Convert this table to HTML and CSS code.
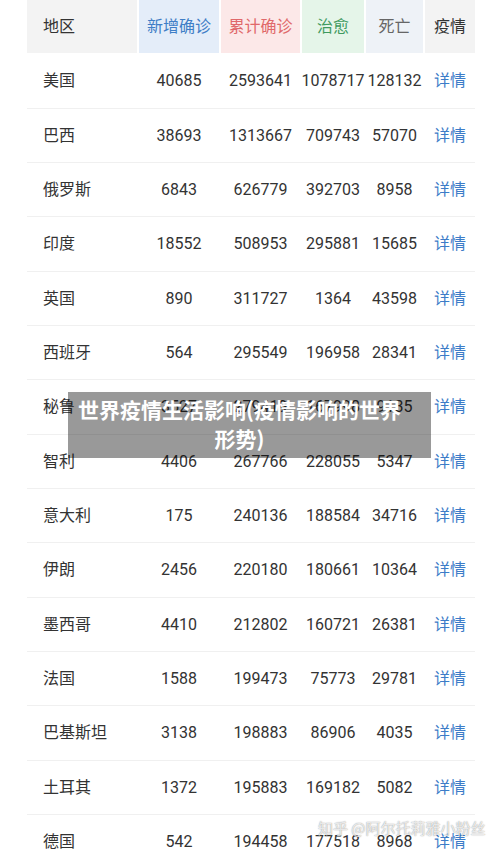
FILE: index.html
```html
<!DOCTYPE html>
<html lang="zh-CN">
<head>
  <meta charset="UTF-8" />
  <meta name="viewport" content="width=device-width, initial-scale=1.0"/>
  <title>世界疫情</title>
  <link rel="stylesheet" href="styles.css">
</head>
<body>
  <div class="table">
    <div class="row head">
      <div class="cell area">地区</div>
      <div class="cell h-new">新增确诊</div>
      <div class="cell h-total">累计确诊</div>
      <div class="cell h-cure">治愈</div>
      <div class="cell h-dead">死亡</div>
      <div class="cell h-more">疫情</div>
    </div>
    <div class="row"><div class="cell area">美国</div><div class="cell">40685</div><div class="cell">2593641</div><div class="cell">1078717</div><div class="cell">128132</div><div class="cell more">详情</div></div>
    <div class="row"><div class="cell area">巴西</div><div class="cell">38693</div><div class="cell">1313667</div><div class="cell">709743</div><div class="cell">57070</div><div class="cell more">详情</div></div>
    <div class="row"><div class="cell area">俄罗斯</div><div class="cell">6843</div><div class="cell">626779</div><div class="cell">392703</div><div class="cell">8958</div><div class="cell more">详情</div></div>
    <div class="row"><div class="cell area">印度</div><div class="cell">18552</div><div class="cell">508953</div><div class="cell">295881</div><div class="cell">15685</div><div class="cell more">详情</div></div>
    <div class="row"><div class="cell area">英国</div><div class="cell">890</div><div class="cell">311727</div><div class="cell">1364</div><div class="cell">43598</div><div class="cell more">详情</div></div>
    <div class="row"><div class="cell area">西班牙</div><div class="cell">564</div><div class="cell">295549</div><div class="cell">196958</div><div class="cell">28341</div><div class="cell more">详情</div></div>
    <div class="row"><div class="cell area">秘鲁</div><div class="cell">3527</div><div class="cell">279419</div><div class="cell">167998</div><div class="cell">9135</div><div class="cell more">详情</div></div>
    <div class="row"><div class="cell area">智利</div><div class="cell">4406</div><div class="cell">267766</div><div class="cell">228055</div><div class="cell">5347</div><div class="cell more">详情</div></div>
    <div class="row"><div class="cell area">意大利</div><div class="cell">175</div><div class="cell">240136</div><div class="cell">188584</div><div class="cell">34716</div><div class="cell more">详情</div></div>
    <div class="row"><div class="cell area">伊朗</div><div class="cell">2456</div><div class="cell">220180</div><div class="cell">180661</div><div class="cell">10364</div><div class="cell more">详情</div></div>
    <div class="row"><div class="cell area">墨西哥</div><div class="cell">4410</div><div class="cell">212802</div><div class="cell">160721</div><div class="cell">26381</div><div class="cell more">详情</div></div>
    <div class="row"><div class="cell area">法国</div><div class="cell">1588</div><div class="cell">199473</div><div class="cell">75773</div><div class="cell">29781</div><div class="cell more">详情</div></div>
    <div class="row"><div class="cell area">巴基斯坦</div><div class="cell">3138</div><div class="cell">198883</div><div class="cell">86906</div><div class="cell">4035</div><div class="cell more">详情</div></div>
    <div class="row"><div class="cell area">土耳其</div><div class="cell">1372</div><div class="cell">195883</div><div class="cell">169182</div><div class="cell">5082</div><div class="cell more">详情</div></div>
    <div class="row"><div class="cell area">德国</div><div class="cell">542</div><div class="cell">194458</div><div class="cell">177518</div><div class="cell">8968</div><div class="cell more">详情</div></div>
  </div>

  <div class="title-box">世界疫情生活影响(疫情影响的世界形势)</div>
  <div class="watermark">知乎 @阿尔托莉雅小粉丝</div>
</body>
</html>
```

FILE: styles.css
```css
* { margin: 0; padding: 0; box-sizing: border-box; }
body { font-family: Roboto, "Noto Sans CJK SC", sans-serif; color: #333; background: #fff; width: 500px; height: 851px; overflow: hidden; position: relative; }

.table { margin-left: 27px; width: 448px; }
.row { display: grid; grid-template-columns: 110px 80px 79px 62px 57px 50px; column-gap: 2px; height: 54.33px; border-bottom: 1px solid #f0f0f0; font-size: 16px; }
.cell { display: flex; align-items: center; justify-content: center; white-space: nowrap; color: #333; }
.cell.area { justify-content: flex-start; padding-left: 16px; padding-bottom: 3px; font-family: "Noto Sans CJK SC", sans-serif; }
.cell.more { color: #3c7cc8; padding-bottom: 3px; font-family: "Noto Sans CJK SC", sans-serif; }

.head { height: 53px; border-bottom: none; margin-bottom: 1.33px; font-family: "Noto Sans CJK SC", sans-serif; }
.head .cell { font-family: "Noto Sans CJK SC", sans-serif; padding-bottom: 3px; }
.head .area { background: #f3f3f3; color: #333; }
.h-new { background: #e4edf9; color: #3f7ec6 !important; }
.h-total { background: #fce8e8; color: #e0686a !important; }
.h-cure { background: #e5f5e9; color: #3f9a5e !important; }
.h-dead { background: #eef2f7; color: #666 !important; }
.h-more { background: #f3f3f3; }

.title-box { position: absolute; left: 68px; top: 392px; width: 363px; height: 66px; padding: 3px 30px 4px 10px; background: rgba(0, 0, 0, 0.4); color: #fff; font-family: "Noto Sans CJK SC", sans-serif; font-weight: bold; font-size: 21px; line-height: 29px; text-align: center; }

.watermark { position: absolute; left: 318px; top: 817px; font-family: "Noto Sans CJK SC", sans-serif; font-size: 15px; color: rgba(255, 255, 255, 0.8); text-shadow: 0 0 1px rgba(0, 0, 0, 0.4), 0 0 2px rgba(0, 0, 0, 0.15); white-space: nowrap; }
```
